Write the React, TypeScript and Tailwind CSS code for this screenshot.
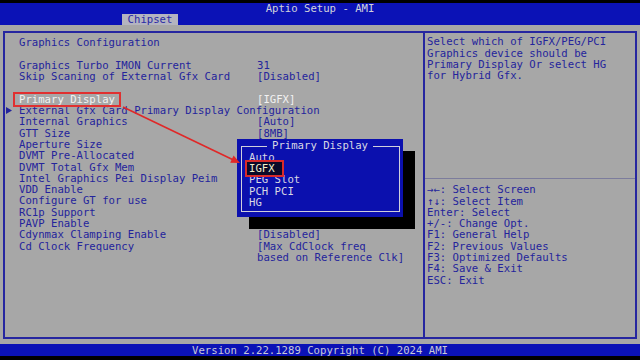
import React from "react";

const rows: { label: string; value?: string; white?: boolean; marker?: boolean; boxed?: boolean }[] = [
  { label: "Graphics Configuration" },
  { label: "" },
  { label: "Graphics Turbo IMON Current", value: "31" },
  { label: "Skip Scaning of External Gfx Card", value: "[Disabled]" },
  { label: "" },
  { label: "Primary Display", value: "[IGFX]", white: true, boxed: true },
  { label: "External Gfx Card Primary Display Configuration", marker: true },
  { label: "Internal Graphics", value: "[Auto]" },
  { label: "GTT Size", value: "[8MB]" },
  { label: "Aperture Size" },
  { label: "DVMT Pre-Allocated" },
  { label: "DVMT Total Gfx Mem" },
  { label: "Intel Graphics Pei Display Peim" },
  { label: "VDD Enable" },
  { label: "Configure GT for use" },
  { label: "RC1p Support" },
  { label: "PAVP Enable" },
  { label: "Cdynmax Clamping Enable", value: "[Disabled]" },
  { label: "Cd Clock Frequency", value: "[Max CdClock freq" },
  { label: "", value: "based on Reference Clk]" },
];

const help = [
  "Select which of IGFX/PEG/PCI",
  "Graphics device should be",
  "Primary Display Or select HG",
  "for Hybrid Gfx.",
];

const keys = [
  "→←: Select Screen",
  "↑↓: Select Item",
  "Enter: Select",
  "+/-: Change Opt.",
  "F1: General Help",
  "F2: Previous Values",
  "F3: Optimized Defaults",
  "F4: Save & Exit",
  "ESC: Exit",
];

export default function App() {
  return (
    <div
      className="relative w-[640px] h-[360px] bg-black flex flex-col overflow-hidden text-[10.63px] leading-[11.3px] whitespace-pre"
      style={{ fontFamily: '"DejaVu Sans Mono", "Liberation Mono", monospace' }}
    >
      <div className="h-[3px] bg-black" />
      {/* header */}
      <div className="h-[22px] bg-[#0b12b6] flex flex-col">
        <div className="h-[11px] flex items-center justify-center text-[#d2d2dc] pt-[1px]">Aptio Setup - AMI</div>
        <div className="h-[11px] flex">
          <div className="ml-[122px] w-[56px] h-[11px] bg-[#b4b4c0] text-[#2a2aa6] flex items-center justify-center pt-[1px]">
            Chipset
          </div>
        </div>
      </div>
      {/* main */}
      <div className="h-[319px] bg-[#a7a7a7] pt-[6px] pl-[3px] pr-[3px] pb-[5px] flex">
        <div className="flex-1 border-2 border-[#2626a0] flex">
          {/* left column */}
          <div className="w-[420px] border-r-2 border-[#2626a0] pt-[4.3px] flex flex-col">
            {rows.map((r, i) => (
              <div key={i} className="h-[11.3px] flex text-[#24249c]">
                <div className="w-[14px] flex items-center pl-[1px]">
                  {r.marker && (
                    <svg width="6" height="7" viewBox="0 0 6 7">
                      <polygon points="0,0 6,3.5 0,7" fill="#24249c" />
                    </svg>
                  )}
                </div>
                <div className={"w-[238px] " + (r.white ? "text-[#f2f2f2]" : "")}>
                  {r.boxed ? (
                    <span className="relative">
                      {r.label}
                      <span className="absolute left-[-6px] right-[-6px] top-[-1px] bottom-[-1px] border-2 border-[#e03030]" />
                    </span>
                  ) : (
                    r.label
                  )}
                </div>
                {r.value && (
                  <div className={r.white ? "text-[#f2f2f2]" : ""}>{r.value}</div>
                )}
              </div>
            ))}
          </div>
          {/* right column */}
          <div className="flex-1 flex flex-col text-[#24249c]">
            <div className="h-[146px] pt-[3.3px] pl-[2px] border-b border-[#7c7c9c]">
              {help.map((h, i) => (
                <div key={i} className="h-[11.3px]">{h}</div>
              ))}
            </div>
            <div className="pt-[5.3px] pl-[2px]">
              {keys.map((k, i) => (
                <div key={i} className="h-[11.3px]">{k}</div>
              ))}
            </div>
          </div>
        </div>
      </div>
      {/* bottom bar */}
      <div className="h-[12px] bg-[#0b12b6] flex items-center justify-center text-[#c8c8d8] pt-[1px]">
        Version 2.22.1289 Copyright (C) 2024 AMI
      </div>
      <div className="h-[4px] bg-black" />

      {/* popup */}
      <div className="absolute left-[237px] top-[139px] w-[166px] h-[78px] bg-[#0b10ae] shadow-[12px_12px_0_0_#000]">
        <div className="absolute left-[4px] top-[7px] right-[3px] bottom-[5px] border border-[#cfcfdc]" />
        <div className="absolute left-0 right-0 top-[1.3px] flex justify-center">
          <span className="bg-[#0b10ae] px-[5px] text-[#d8d8e4] h-[11.3px]">Primary Display</span>
        </div>
        <div className="absolute left-[12px] top-[12.8px] flex flex-col text-[#d8d8e4]">
          <div className="h-[11.3px]">Auto</div>
          <div className="h-[11.3px]">
            <span className="relative text-[#f4f0cc]">
              <span className="absolute left-[-4px] right-[-9px] top-[-2px] bottom-[-2px] bg-[#0a0a28] border-2 border-[#d82a2a]" />
              <span className="relative">IGFX</span>
            </span>
          </div>
          <div className="h-[11.3px]">PEG Slot</div>
          <div className="h-[11.3px]">PCH PCI</div>
          <div className="h-[11.3px]">HG</div>
        </div>
      </div>

      {/* red arrow */}
      <svg className="absolute left-0 top-0 pointer-events-none" width="640" height="360" viewBox="0 0 640 360">
        <line x1="123" y1="107" x2="233" y2="159.7" stroke="#e02828" strokeWidth="1.6" />
        <polygon points="240,163 230.2,162.7 233.6,155.5" fill="#e02828" />
      </svg>
    </div>
  );
}
